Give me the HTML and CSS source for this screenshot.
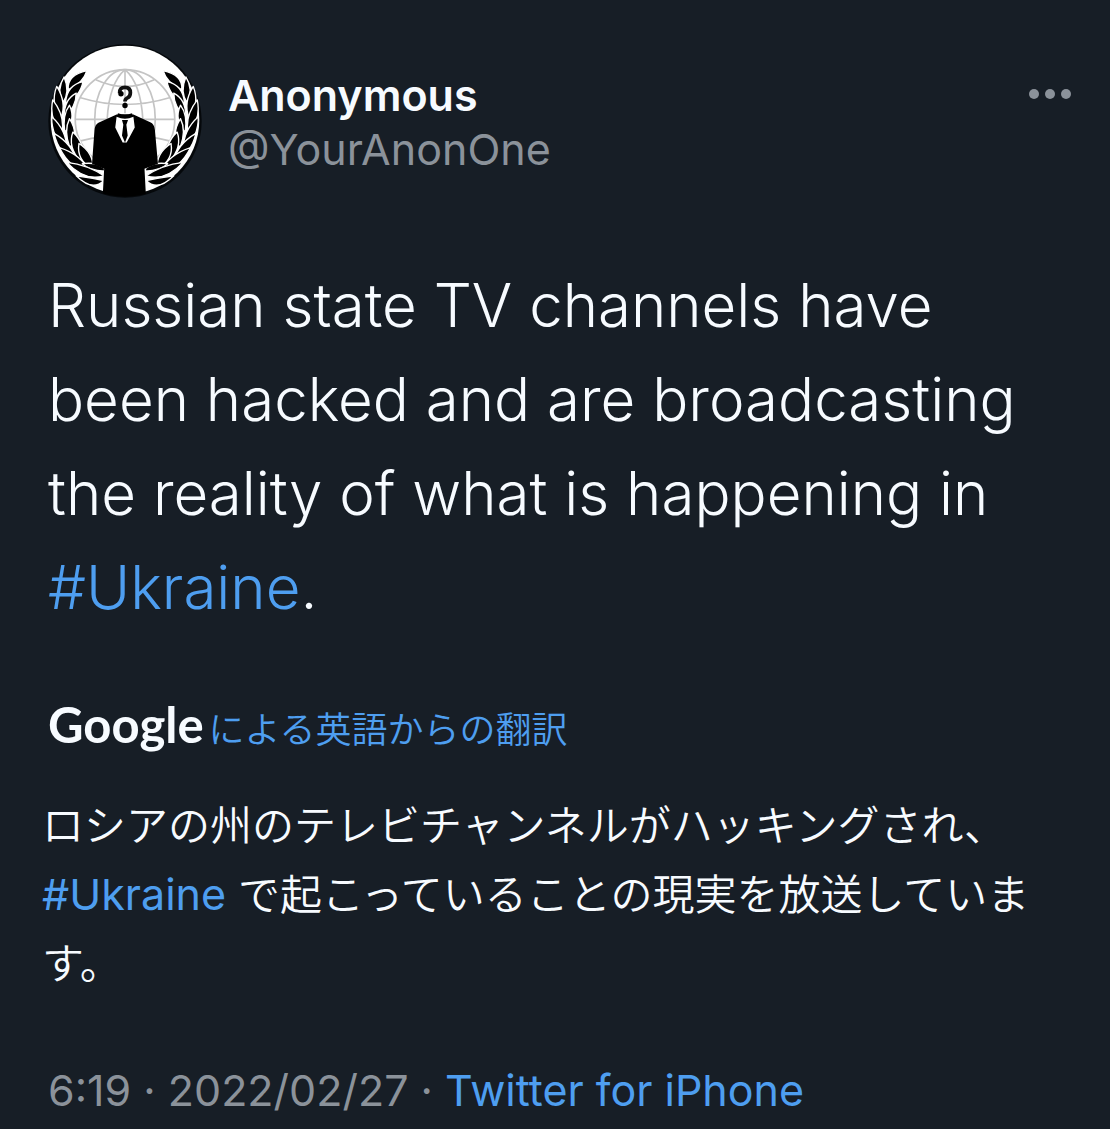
FILE: index.html
```html
<!DOCTYPE html>
<html lang="ja">
<head>
  <meta charset="UTF-8">
  <meta name="viewport" content="width=device-width, initial-scale=1.0">
  <title>Anonymous - Tweet</title>
  <link rel="stylesheet" href="styles.css">
</head>

<body>

  <article class="tweet">
    <header class="tweet-header">
      <svg class="avatar" viewBox="28 34 458 458" role="img" aria-label="Anonymous">
        <defs>
          <clipPath id="badge"><circle cx="257" cy="263" r="225"/></clipPath>
          <g id="laurel" stroke="#fff" stroke-width="4" stroke-linejoin="round">
            <path d="M88 170Q84 126 144 113Q132 152 88 170Z"/>
            <path d="M80 210Q84 156 132 146Q124 190 80 210Z"/>
            <path d="M76 250Q76 198 112 180Q112 224 76 250Z"/>
            <path d="M78 296Q70 245 92 216Q112 260 78 296Z"/>
            <path d="M93 342Q74 292 92 256Q122 304 93 342Z"/>
            <path d="M124 382Q86 340 102 296Q144 336 124 382Z"/>
            <path d="M162 406Q112 380 120 330Q164 358 162 406Z"/>
            <path d="M73 207Q52 170 76 132Q94 176 73 207Z"/>
            <path d="M67 252Q34 212 54 160Q84 208 67 252Z"/>
            <path d="M69 300Q30 258 42 200Q80 248 69 300Z"/>
            <path d="M84 348Q38 312 39 250Q84 290 84 348Z"/>
            <path d="M114 388Q60 362 46 300Q102 332 114 388Z"/>
            <path d="M154 416Q94 408 62 342Q126 362 154 416Z"/>
            <path d="M196 412Q150 410 130 390Q172 384 196 404Z"/>
            <path d="M194 426Q138 444 84 386Q148 394 194 426Z"/>
            <path d="M194 440Q160 474 112 426Q156 432 194 440Z"/>
          </g>
        </defs>
        <circle cx="257" cy="263" r="228" fill="#05080b"/>
        <circle cx="257" cy="260" r="221" fill="#fff"/>
        <g fill="none" stroke="#c4c4c4" stroke-width="5">
          <circle cx="257" cy="258" r="148"/>
          <ellipse cx="257" cy="258" rx="90" ry="148"/>
          <path d="M257 110V240M109 258H405M170 140Q257 180 344 140M125 194Q257 234 389 194M125 322Q257 290 389 322M257 110Q210 150 204 258M257 110Q304 150 310 258"/>
        </g>
        <use href="#laurel"/>
        <use href="#laurel" transform="translate(514 0) scale(-1 1)"/>
        <g clip-path="url(#badge)">
          <path d="M232 244L178 268Q167 274 166 292L159 390L195 405L190 500H320L315 405L355 390L346 290Q344 272 332 267L282 244Z"/>
        </g>
        <path fill="#fff" d="M232 250L228 282L250 327L262 327L286 282L282 250Q257 262 232 250Z"/>
        <path d="M236 240Q257 248 278 240L280 249Q257 257 234 249ZM248 260H266L261 274L265 306L257 327L248 306L252 274Z"/>
        <path d="M241 180Q240 163 257 163Q273 163 273 179Q273 191 263 195Q257 198 257 205" fill="none" stroke="#111" stroke-width="11"/>
        <circle cx="245" cy="182" r="8"/>
        <circle cx="257" cy="217" r="8"/>
      </svg>
      <div class="author">
        <a class="name" href="#">Anonymous</a>
        <a class="handle" href="#">@YourAnonOne</a>
      </div>
      <button class="more" type="button" aria-label="その他">
        <svg viewBox="0 0 42 10" aria-hidden="true">
          <circle cx="5" cy="5" r="5"/>
          <circle cx="21" cy="5" r="5"/>
          <circle cx="37" cy="5" r="5"/>
        </svg>
      </button>
    </header>

    <p class="tweet-text" lang="en">Russian state TV channels have been hacked and are broadcasting the reality of what is happening in <a href="#">#Ukraine</a>.</p>

    <a class="translated-by" href="#"><span class="google">Google</span>による英語からの翻訳</a>

    <p class="translation">ロシアの州のテレビチャンネルがハッキングされ、<a href="#">#Ukraine</a> で起こっていることの現実を放送しています。</p>

    <footer class="meta">
      <time datetime="2022-02-27T06:19">6:19 · 2022/02/27</time> · <a href="#">Twitter for iPhone</a>
    </footer>
  </article>

</body>
</html>
```
FILE: styles.css
```css
:root {
  --bg-color: #171e26;
  --text-color: #f7fbff;
  --muted-color: #8b929a;
  --link-color: #4e9ef0;
}

* {
  margin: 0;
  padding: 0;
  box-sizing: border-box;
}

body {
  min-height: 100vh;
  background: var(--bg-color);
  color: var(--text-color);
  font-family: Inter, "Noto Sans CJK JP", sans-serif;
}

a {
  color: var(--link-color);
  text-decoration: none;
}

.tweet {
  display: flex;
  flex-direction: column;
  padding: 44px 39px 0 48px;
}

.tweet-header {
  display: flex;
  align-items: flex-start;
  gap: 26px;
}

.avatar {
  flex: none;
  width: 154px;
  height: 154px;
}

.author {
  flex: 1;
  display: flex;
  flex-direction: column;
  padding-top: 24px;
  font-size: 43px;
  line-height: 54px;
}

.author .name {
  color: var(--text-color);
  font-weight: 600;
}

.author .handle {
  color: var(--muted-color);
}

.more {
  margin-top: 40px;
  padding: 5px 0;
  background: none;
  border: none;
  cursor: pointer;
}

.more svg {
  display: block;
  width: 42px;
  height: 10px;
  fill: var(--muted-color);
}

.tweet-text {
  margin-top: 60px;
  font-size: 60px;
  font-weight: 300;
  line-height: 94px;
}

.translated-by {
  display: flex;
  align-items: baseline;
  gap: 5px;
  margin-top: 60px;
  font-size: 36px;
  font-weight: 350;
  line-height: 60px;
}

.google {
  color: var(--text-color);
  font-family: Lato, sans-serif;
  font-size: 49px;
  font-weight: 700;
}

.translation {
  margin: 31px 0 0 -6px;
  font-size: 42px;
  font-weight: 350;
  line-height: 69px;
}

.translation a {
  font-size: 43px;
  font-weight: 400;
}

.meta {
  margin-top: 65px;
  color: var(--muted-color);
  font-size: 43px;
  line-height: 54px;
}
```
